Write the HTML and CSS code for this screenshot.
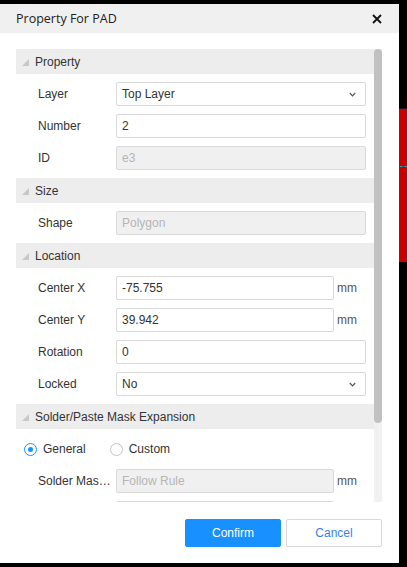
FILE: index.html
```html
<!DOCTYPE html>
<html>
<head>
<meta charset="utf-8">
<link rel="stylesheet" href="styles.css">
</head>
<body>
<div class="screen">
  <div class="dialog">
    <div class="dlg-header">
      <span class="dlg-title">Property For PAD</span>
      <svg class="close" width="10" height="10" viewBox="0 0 10 10"><path d="M1 1 L9 9 M9 1 L1 9" stroke="#111" stroke-width="1.8" fill="none"/></svg>
    </div>
    <div class="dlg-body">
      <div class="scroll">
        <div class="content">
          <div class="sec-head"><span class="tri"></span>Property</div>
          <div class="row"><span class="label">Layer</span><div class="field select"><span>Top Layer</span><svg width="7" height="5" viewBox="0 0 7 5"><path d="M0.8 1 L3.5 3.8 L6.2 1" stroke="#555" stroke-width="1.2" fill="none"/></svg></div></div>
          <div class="row"><span class="label">Number</span><div class="field">2</div></div>
          <div class="row"><span class="label">ID</span><div class="field disabled">e3</div></div>
          <div class="sec-head"><span class="tri"></span>Size</div>
          <div class="row"><span class="label">Shape</span><div class="field disabled">Polygon</div></div>
          <div class="sec-head"><span class="tri"></span>Location</div>
          <div class="row"><span class="label">Center X</span><div class="field">-75.755</div><span class="unit">mm</span></div>
          <div class="row"><span class="label">Center Y</span><div class="field">39.942</div><span class="unit">mm</span></div>
          <div class="row"><span class="label">Rotation</span><div class="field">0</div></div>
          <div class="row"><span class="label">Locked</span><div class="field select"><span>No</span><svg width="7" height="5" viewBox="0 0 7 5"><path d="M0.8 1 L3.5 3.8 L6.2 1" stroke="#555" stroke-width="1.2" fill="none"/></svg></div></div>
          <div class="sec-head"><span class="tri"></span>Solder/Paste Mask Expansion</div>
          <div class="radio-row">
            <label class="radio"><span class="dot checked"></span>General</label>
            <label class="radio"><span class="dot"></span>Custom</label>
          </div>
          <div class="row"><span class="label" title="Solder Mask Expansion">Solder Mas…</span><div class="field disabled">Follow Rule</div><span class="unit">mm</span></div>
          <div class="row"><span class="label"></span><div class="field disabled"></div><span class="unit"></span></div>
        </div>
        <div class="scrollbar"><div class="thumb"></div></div>
      </div>
    </div>
    <div class="dlg-footer">
      <button class="btn primary">Confirm</button>
      <button class="btn">Cancel</button>
    </div>
  </div>
  <div class="side">
    <div class="side-top"></div>
    <div class="side-red"><div class="dots"></div></div>
  </div>
</div>
</body>
</html>
```
FILE: styles.css
```css
html, body {
  margin: 0;
  padding: 0;
  background: #000;
  width: 407px;
  height: 567px;
  overflow: hidden;
}
.screen {
  display: flex;
  align-items: flex-start;
  font-family: "Liberation Sans", Arial, sans-serif;
  font-size: 12px;
  color: #333;
}
.dialog {
  width: 399px;
  height: 559px;
  margin-top: 4px;
  background: #fff;
  display: flex;
  flex-direction: column;
  flex-shrink: 0;
}
.dlg-header {
  height: 29px;
  background: #f0f0f0;
  display: flex;
  align-items: center;
  justify-content: space-between;
  padding: 0 17px 0 16px;
  flex-shrink: 0;
}
.dlg-title {
  font-family: "Open Sans", "Noto Sans", sans-serif;
  font-size: 12.5px;
  color: #222;
}
.close {
  display: block;
  margin-top: 1px;
}
.dlg-body {
  padding: 16px 17px 0 16px;
  flex-shrink: 0;
}
.scroll {
  height: 453px;
  display: flex;
}
.content {
  width: 358px;
  height: 453px;
  overflow: hidden;
  display: flex;
  flex-direction: column;
  gap: 8px;
}
.sec-head {
  height: 25px;
  flex-shrink: 0;
  background: #ededed;
  display: flex;
  align-items: center;
  padding-left: 6px;
  color: #333;
}
.tri {
  width: 0;
  height: 0;
  border-left: 7px solid transparent;
  border-bottom: 7px solid #c8c8c8;
  margin-right: 6px;
  margin-top: 1px;
}
.row {
  display: flex;
  align-items: center;
  height: 24px;
  flex-shrink: 0;
  padding-left: 22px;
  padding-right: 8px;
}
.label {
  width: 75px;
  margin-right: 3px;
  white-space: nowrap;
  color: #333;
}
.field {
  flex: 1;
  height: 24px;
  box-sizing: border-box;
  border: 1px solid #d9d9d9;
  border-radius: 2px;
  padding: 0 5px;
  display: flex;
  align-items: center;
  color: #333;
  background: #fff;
}
.field.disabled {
  background: #f0f0f0;
  color: #b5b5b5;
}
.select {
  justify-content: space-between;
  padding-right: 9px;
}
.unit {
  width: 29px;
  padding-left: 3px;
  color: #555;
}
.radio-row {
  height: 24px;
  flex-shrink: 0;
  display: flex;
  align-items: center;
  padding-left: 8px;
}
.radio {
  display: flex;
  align-items: center;
  margin-right: 24px;
  color: #333;
}
.dot {
  width: 13px;
  height: 13px;
  box-sizing: border-box;
  border: 1px solid #c4c4c4;
  border-radius: 50%;
  margin-right: 6px;
  display: flex;
  align-items: center;
  justify-content: center;
}
.dot.checked {
  border-color: #1890ff;
}
.dot.checked::after {
  content: "";
  width: 5px;
  height: 5px;
  border-radius: 50%;
  background: #1890ff;
}
.scrollbar {
  width: 8px;
  height: 453px;
  background: #f1f1f1;
}
.thumb {
  height: 374px;
  background: #c1c1c1;
  border-radius: 4px;
}
.dlg-footer {
  display: flex;
  justify-content: flex-end;
  gap: 5px;
  padding: 17px 17px 16px 0;
}
.btn {
  width: 96px;
  height: 28px;
  box-sizing: border-box;
  border: 1px solid #d9d9d9;
  border-radius: 2px;
  background: #fff;
  color: #3a7ff0;
  font-family: "Liberation Sans", Arial, sans-serif;
  font-size: 12px;
  padding: 0;
}
.btn.primary {
  background: #1890ff;
  border-color: #1890ff;
  color: #fff;
}
.side {
  flex: 1;
  display: flex;
  flex-direction: column;
}
.side-top {
  height: 108px;
  background: #000;
  border-bottom: 1px solid #2a0a1a;
}
.side-red {
  height: 153px;
  background: #c80000;
  position: relative;
}
.dots {
  position: absolute;
  left: 1px;
  right: 0;
  top: 57px;
  border-top: 1px dashed #2aa6b0;
}
```
